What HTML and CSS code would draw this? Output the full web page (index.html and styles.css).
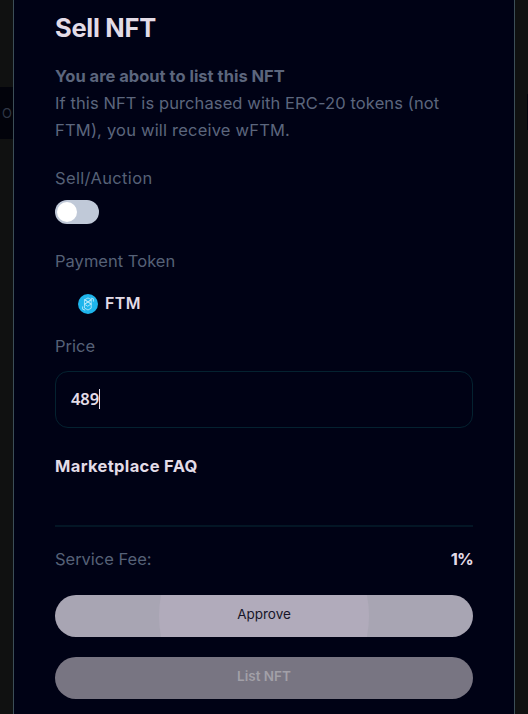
FILE: index.html
```html
<!DOCTYPE html>
<html lang="en">
<head>
<meta charset="utf-8">
<title>Sell NFT</title>
<link rel="stylesheet" href="styles.css">
</head>
<body>
<div class="page">
  <aside class="backdrop"><div class="tab">O</div></aside>
  <main class="modal">
    <h1 class="title"><span>Sell NFT</span></h1>
    <div class="intro">
      <strong class="lead">You are about to list this NFT</strong>
      <div class="line-one">If this NFT is purchased with ERC-20 tokens (not</div>
      <div class="line-two">FTM), you will receive wFTM.</div>
    </div>
    <div class="label sale">Sell/Auction</div>
    <div class="switch"><span class="knob"></span></div>
    <div class="label payment">Payment Token</div>
    <div class="token">
      <svg class="coin" viewBox="0 0 20 20" width="20" height="20" aria-hidden="true">
        <circle cx="10" cy="10" r="10" fill="#1eb5ec"/>
        <g fill="none" stroke="#b9e9fa" stroke-width=".85" stroke-linejoin="round" stroke-linecap="round">
          <path d="M6.8 5.7 10 3.9l3.2 1.8v8.5L10 16l-3.2-1.8z"/>
          <path d="m6.8 5.7 3.2 2 3.2-2M6.8 10 10 8l3.2 2-3.2 2zM6.8 6l6.4 4M13.2 6l-6.4 4"/>
          <path d="M13.2 4.2 15.4 4.8v2.4M4.6 12.8v2.4l2.2.8"/>
        </g>
      </svg>
      <span class="token-name">FTM</span>
    </div>
    <div class="label price">Price</div>
    <div class="input"><span class="value">489</span><span class="caret"></span></div>
    <div class="faq"><span>Marketplace FAQ</span></div>
    <div class="fee"><span class="label fee-label">Service Fee:</span><span class="percent">1%</span></div>
    <button class="button approve"><span class="ripple"></span><span class="text">Approve</span></button>
    <button class="button list"><span class="text">List NFT</span></button>
  </main>
  <aside class="backdrop"><div class="edge"></div></aside>
</div>
</body>
</html>
```
FILE: styles.css
```css
* { box-sizing: border-box; }
body { margin: 0; background: #101112; font-family: Inter, "Liberation Sans", sans-serif; }
.page { display: grid; grid-template-columns: 13px 502px 13px; height: 714px; overflow: hidden; }
.backdrop { background: #101111; overflow: hidden; }
.tab { margin-top: 87px; height: 52px; padding-left: 2px; background: #02030b; color: #303746; font-size: 13px; line-height: 52px; }
.edge { width: 1px; height: 36px; margin: 94px 0 0 12px; background: #02030b; }
.modal { height: 714px; padding: 10px 41px 0; border: solid #3c4e57; border-width: 0 1px; background: #000215; color: #e3dce7; display: flex; flex-direction: column; }
.title { margin: 0; height: 36px; line-height: 36px; font-size: 25.5px; font-weight: 700; letter-spacing: -.28px; white-space: nowrap; }
.intro { margin-top: 17px; height: 81px; line-height: 27px; color: #5c667d; font-size: 16.5px; white-space: nowrap; }
.lead { display: block; font-weight: 700; letter-spacing: 0; }
.line-one { letter-spacing: .1px; }
.line-two { letter-spacing: .2px; }
.label { height: 24px; line-height: 24px; color: #566177; font-size: 16.5px; letter-spacing: .35px; white-space: nowrap; }
.sale { margin-top: 22px; }
.switch { width: 44px; height: 24px; margin-top: 10px; padding: 2px; border-radius: 12px; background: #c0c9d8; }
.knob { display: block; width: 20px; height: 20px; border-radius: 50%; background: #fff; }
.payment { margin-top: 25px; letter-spacing: .02px; }
.token { height: 24px; margin-top: 19px; padding-left: 23px; display: flex; align-items: center; gap: 7px; font-size: 16.5px; font-weight: 500; }
.token-name { margin-top: -2px; letter-spacing: .4px; font-weight: 600; font-size: 16px; }
.price { margin-top: 18px; letter-spacing: 0; }
.input { height: 57px; margin-top: 12.5px; padding: 0 0 1px 15px; border: 1px solid #042230; border-radius: 13px; display: flex; align-items: center; font: 600 16.5px "Noto Sans", sans-serif; letter-spacing: -.1px; }
.caret { width: 1px; height: 20px; background: #e3dce7; }
.faq { height: 24px; margin-top: 26.5px; line-height: 24px; font-size: 16.5px; font-weight: 700; letter-spacing: .35px; white-space: nowrap; }
.fee { height: 46px; margin-top: 47px; padding-top: 21px; border-top: 2px solid #031625; display: flex; justify-content: space-between; }
.fee-label { letter-spacing: -.02px; }
.percent { line-height: 24px; font-size: 16.5px; font-weight: 700; letter-spacing: -.8px; }
.fee-label, .percent { margin-top: -1px; }
.button { flex: none; display: grid; place-items: center; height: 42px; margin: 23.5px 0 0; padding: 0 0 3px; border: 0; border-radius: 21px; overflow: hidden; background: #a8a5b3; color: #171629; font: 400 13.5px Inter, "Liberation Sans", sans-serif; position: relative; }
.ripple { position: absolute; width: 210px; height: 210px; left: 104px; top: -84px; border-radius: 50%; background: #b1abbb; }
.text { position: relative; }
.list { margin-top: 20px; background: #787582; color: #a2a0a8; font-weight: 600; }
```
